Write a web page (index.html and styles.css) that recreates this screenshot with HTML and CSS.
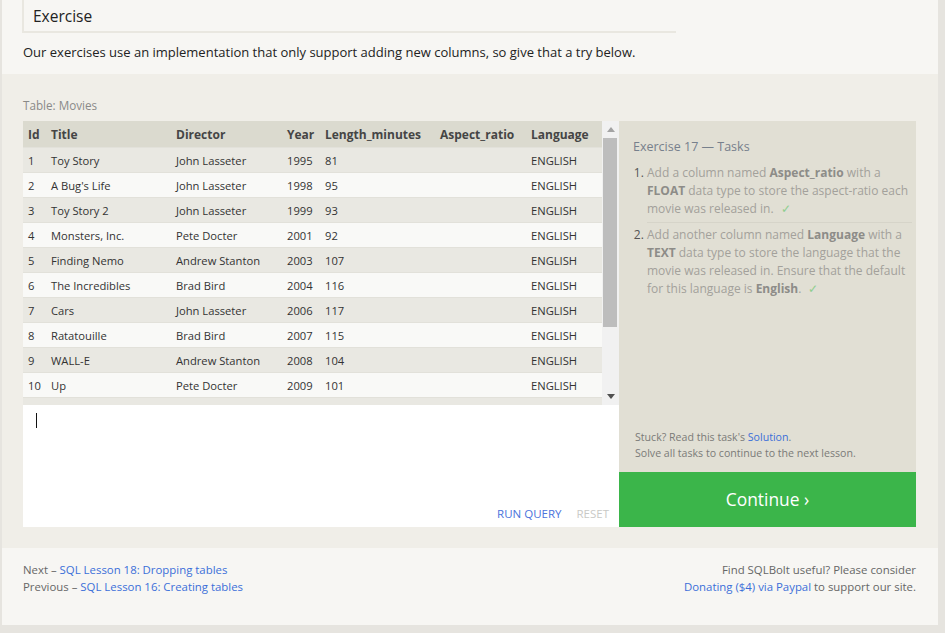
FILE: index.html
```html
<!DOCTYPE html>
<html lang="en">
<head>
<meta charset="utf-8">
<title>SQL Lesson 17: Altering tables</title>
<link rel="stylesheet" href="styles.css">
</head>
<body>
<div class="page">
  <section class="intro">
    <div class="heading">Exercise</div>
    <p class="lead">Our exercises use an implementation that only support adding new columns, so give that a try below.</p>
  </section>

  <section class="exercise">
    <div class="table-label">Table: Movies</div>
    <div class="workspace">
      <div class="left">
        <div class="table-box">
          <div class="table-wrap">
            <table class="movies">
              <colgroup>
                <col class="c-id"><col class="c-title"><col class="c-dir"><col class="c-year"><col class="c-len"><col class="c-asp"><col class="c-lang">
              </colgroup>
              <thead>
                <tr><th>Id</th><th>Title</th><th>Director</th><th>Year</th><th>Length_minutes</th><th>Aspect_ratio</th><th>Language</th></tr>
              </thead>
              <tbody>
                <tr><td>1</td><td>Toy Story</td><td>John Lasseter</td><td>1995</td><td>81</td><td></td><td>ENGLISH</td></tr>
                <tr><td>2</td><td>A Bug's Life</td><td>John Lasseter</td><td>1998</td><td>95</td><td></td><td>ENGLISH</td></tr>
                <tr><td>3</td><td>Toy Story 2</td><td>John Lasseter</td><td>1999</td><td>93</td><td></td><td>ENGLISH</td></tr>
                <tr><td>4</td><td>Monsters, Inc.</td><td>Pete Docter</td><td>2001</td><td>92</td><td></td><td>ENGLISH</td></tr>
                <tr><td>5</td><td>Finding Nemo</td><td>Andrew Stanton</td><td>2003</td><td>107</td><td></td><td>ENGLISH</td></tr>
                <tr><td>6</td><td>The Incredibles</td><td>Brad Bird</td><td>2004</td><td>116</td><td></td><td>ENGLISH</td></tr>
                <tr><td>7</td><td>Cars</td><td>John Lasseter</td><td>2006</td><td>117</td><td></td><td>ENGLISH</td></tr>
                <tr><td>8</td><td>Ratatouille</td><td>Brad Bird</td><td>2007</td><td>115</td><td></td><td>ENGLISH</td></tr>
                <tr><td>9</td><td>WALL-E</td><td>Andrew Stanton</td><td>2008</td><td>104</td><td></td><td>ENGLISH</td></tr>
                <tr><td>10</td><td>Up</td><td>Pete Docter</td><td>2009</td><td>101</td><td></td><td>ENGLISH</td></tr>
                <tr><td>11</td><td>Toy Story 3</td><td>Lee Unkrich</td><td>2010</td><td>103</td><td></td><td>ENGLISH</td></tr>
                <tr><td>12</td><td>Cars 2</td><td>John Lasseter</td><td>2011</td><td>120</td><td></td><td>ENGLISH</td></tr>
                <tr><td>13</td><td>Brave</td><td>Brenda Chapman</td><td>2012</td><td>102</td><td></td><td>ENGLISH</td></tr>
                <tr><td>14</td><td>Monsters University</td><td>Dan Scanlon</td><td>2013</td><td>110</td><td></td><td>ENGLISH</td></tr>
              </tbody>
            </table>
          </div>
          <div class="scrollbar" aria-hidden="true">
            <div class="sb-btn">
              <svg width="8" height="5" viewBox="0 0 8 5"><path d="M4 0 L8 5 L0 5 Z" fill="#a3a3a3"/></svg>
            </div>
            <div class="sb-track"><div class="sb-thumb"></div></div>
            <div class="sb-btn">
              <svg width="8" height="5" viewBox="0 0 8 5"><path d="M0 0 L8 0 L4 5 Z" fill="#505050"/></svg>
            </div>
          </div>
        </div>
        <div class="editor">
          <span class="caret"></span>
          <div class="actions">
            <span class="run">RUN QUERY</span>
            <span class="reset">RESET</span>
          </div>
        </div>
      </div>

      <div class="tasks">
        <div class="tasks-body">
          <div class="tasks-title">Exercise 17 — Tasks</div>
          <ol class="task-list">
            <li>Add a column named <b>Aspect_ratio</b> with a <b>FLOAT</b> data type to store the aspect-ratio each movie was released in. <span class="check">✓</span></li>
            <li>Add another column named <b>Language</b> with a <b>TEXT</b> data type to store the language that the movie was released in. Ensure that the default for this language is <b>English</b>. <span class="check">✓</span></li>
          </ol>
          <div class="stuck">
            Stuck? Read this task's <a href="#">Solution</a>.<br>
            Solve all tasks to continue to the next lesson.
          </div>
        </div>
        <div class="continue">Continue ›</div>
      </div>
    </div>
  </section>

  <footer class="foot">
    <div class="foot-left">
      <div>Next – <a href="#">SQL Lesson 18: Dropping tables</a></div>
      <div>Previous – <a href="#">SQL Lesson 16: Creating tables</a></div>
    </div>
    <div class="foot-right">
      <div>Find SQLBolt useful? Please consider</div>
      <div><a href="#">Donating ($4) via Paypal</a> to support our site.</div>
    </div>
  </footer>
</div>
</body>
</html>
```

FILE: styles.css
```css
html { background: #e6e4df; }
body {
  margin: 0;
  font-family: "Open Sans", "Liberation Sans", sans-serif;
  color: #333;
}
a { color: #3b6fd9; text-decoration: none; }

.page {
  width: 936px;
  margin-left: 2px;
  background: #f7f6f3;
}

/* intro */
.intro { padding: 0 0 0 20px; height: 74px; box-sizing: border-box; }
.heading {
  width: 643px;
  height: 30px;
  padding-top: 1px;
  line-height: 31px;
  padding-left: 9px;
  border-left: 2px solid #e9e7e0;
  border-bottom: 2px solid #e9e7e0;
  font-size: 15.5px;
  color: #222;
}
.lead {
  margin: 10px 0 0 1px;
  font-size: 13px;
  line-height: 18px;
  color: #222;
}

/* exercise */
.exercise {
  background: #f0eee8;
  padding: 23px 22px 21px 21px;
}
.table-label {
  font-size: 11.7px;
  line-height: 16px;
  color: #8a8a88;
  margin-bottom: 8px;
}
.workspace { display: flex; }
.left { width: 596px; display: flex; flex-direction: column; }

.table-box {
  height: 284px;
  display: flex;
  background: #e9e8e2;
}
.table-wrap {
  flex: 1;
  overflow: hidden;
}
.movies {
  width: 100%;
  border-collapse: collapse;
  table-layout: fixed;
}
.c-id { width: 23px; }
.c-title { width: 125px; }
.c-dir { width: 111px; }
.c-year { width: 38px; }
.c-len { width: 115px; }
.c-asp { width: 91px; }
.movies th {
  height: 26px;
  padding: 0 5px;
  text-align: left;
  font-size: 12px;
  font-weight: 700;
  color: #454545;
  background: #dbdacf;
  white-space: nowrap;
}
.movies td {
  height: 25px;
  padding: 0 5px;
  font-size: 11.2px;
  color: #333;
  white-space: nowrap;
  border-top: 1px solid #e2e1da;
  box-sizing: border-box;
}
.movies tbody tr:nth-child(odd) td { background: #e9e8e2; }
.movies tbody tr:nth-child(even) td { background: #f9f9f7; }

.scrollbar {
  width: 17px;
  background: #f1f1f1;
  display: flex;
  flex-direction: column;
}
.sb-btn {
  height: 17px;
  display: flex;
  align-items: center;
  justify-content: center;
}
.sb-track { flex: 1; }
.sb-thumb {
  height: 189px;
  margin: 0 2px 0 1px;
  background: #bdbdbd;
}

.editor {
  height: 122px;
  background: #fff;
  box-sizing: border-box;
  padding: 8px 10px 5px 13px;
  display: flex;
  flex-direction: column;
}
.caret {
  display: block;
  width: 1px;
  height: 15px;
  background: #111;
}
.actions {
  margin-top: auto;
  display: flex;
  justify-content: flex-end;
  gap: 15px;
  font-size: 11.5px;
  line-height: 16px;
}
.run { color: #4a73dc; }
.reset { color: #c9c9c6; }

/* tasks */
.tasks {
  width: 297px;
  display: flex;
  flex-direction: column;
}
.tasks-body {
  flex: 1;
  background: #e1dfd4;
  padding: 17px 4px 11px 14px;
  display: flex;
  flex-direction: column;
}
.tasks-title {
  font-size: 12.5px;
  line-height: 18px;
  color: #77808c;
}
.task-list {
  margin: 8px 0 0 0;
  padding-left: 14px;
  font-size: 12px;
  line-height: 18px;
  color: #a3a19b;
}
.task-list li::marker { color: #555; font-weight: 400; }
.task-list b { color: #8d8c88; font-weight: 700; }
.task-list li { padding-bottom: 4px; }
.task-list li + li {
  border-top: 1px solid #d6d4c9;
  padding-top: 3px;
}
.check { color: #8fce8f; margin-left: 4px; }
.stuck {
  margin-top: auto;
  font-size: 10.6px;
  line-height: 16px;
  color: #7b7b78;
  padding-left: 2px;
}
.continue {
  height: 55px;
  line-height: 55px;
  background: #3bb54a;
  color: #fff;
  text-align: center;
  font-size: 17.4px;
}

/* footer */
.foot {
  height: 77px;
  box-sizing: border-box;
  padding: 13px 22px 0 21px;
  display: flex;
  justify-content: space-between;
  font-size: 11.4px;
  line-height: 17px;
  color: #666;
}
.foot-right { text-align: right; }
```
